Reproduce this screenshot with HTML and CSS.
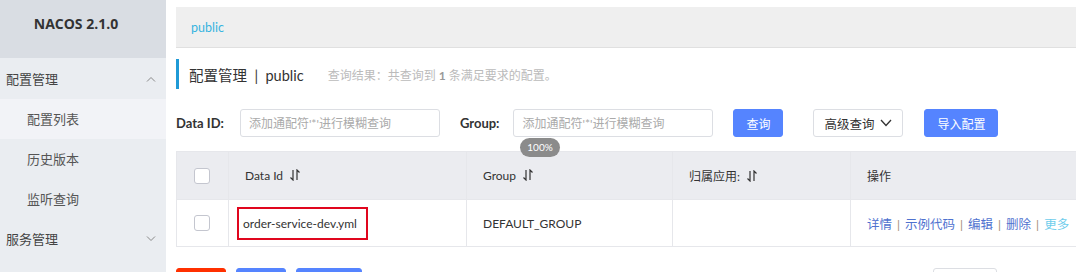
FILE: index.html
```html
<!DOCTYPE html>
<html lang="zh-CN">
<head>
  <meta charset="UTF-8" />
  <title>Nacos - 配置列表</title>
  <link rel="stylesheet" href="styles.css">
</head>
<body>

  <!-- Sidebar -->
  <aside class="sidebar">
    <div class="brand">NACOS 2.1.0</div>
    <ul class="menu">
      <li class="menu-group">配置管理
        <svg class="chev" width="10" height="6" viewBox="0 0 10 6"><path d="M1 5.5 L5 1.5 L9 5.5" fill="none" stroke="#888" stroke-width="1"/></svg>
      </li>
      <li class="menu-item active">配置列表</li>
      <li class="menu-item">历史版本</li>
      <li class="menu-item">监听查询</li>
      <li class="menu-group">服务管理
        <svg class="chev" width="10" height="6" viewBox="0 0 10 6"><path d="M1 0.5 L5 4.5 L9 0.5" fill="none" stroke="#888" stroke-width="1"/></svg>
      </li>
    </ul>
  </aside>

  <!-- Main -->
  <main class="main">
    <div class="crumb"><span>public</span></div>

    <div class="page-title">
      <span class="title">配置管理 &nbsp;|&nbsp; public</span>
      <span class="summary">查询结果：共查询到 <b>1</b> 条满足要求的配置。</span>
    </div>

    <div class="search">
      <label class="label label-first">Data ID:</label>
      <input class="input" placeholder="添加通配符'*'进行模糊查询">
      <label class="label">Group:</label>
      <input class="input" placeholder="添加通配符'*'进行模糊查询">
      <button class="btn btn-primary btn-query">查询</button>
      <button class="btn btn-normal btn-adv">高级查询
        <svg width="12" height="8" viewBox="0 0 12 8"><path d="M1 1 L6 6.5 L11 1" fill="none" stroke="#333" stroke-width="1.3"/></svg>
      </button>
      <button class="btn btn-primary">导入配置</button>
    </div>

    <div class="table-wrap">
      <div class="zoom-tip">100%</div>
      <table class="grid">
        <colgroup>
          <col style="width:52px"><col style="width:238px"><col style="width:206px"><col style="width:178px"><col>
        </colgroup>
        <thead>
          <tr>
            <th><span class="check"></span></th>
            <th>Data Id <svg class="sort" width="10" height="12" viewBox="0 0 10 12"><path d="M3 1 V11 L0.5 8.5 M7 11 V1 L9.5 3.5" fill="none" stroke="#333" stroke-width="1.2"/></svg></th>
            <th>Group <svg class="sort" width="10" height="12" viewBox="0 0 10 12"><path d="M3 1 V11 L0.5 8.5 M7 11 V1 L9.5 3.5" fill="none" stroke="#333" stroke-width="1.2"/></svg></th>
            <th>归属应用: <svg class="sort" width="10" height="12" viewBox="0 0 10 12"><path d="M3 1 V11 L0.5 8.5 M7 11 V1 L9.5 3.5" fill="none" stroke="#333" stroke-width="1.2"/></svg></th>
            <th>操作</th>
          </tr>
        </thead>
        <tbody>
          <tr>
            <td><span class="check"></span></td>
            <td><span class="mark">order-service-dev.yml</span></td>
            <td>DEFAULT_GROUP</td>
            <td></td>
            <td class="ops">
              <a>详情</a><i>|</i><a>示例代码</a><i>|</i><a>编辑</a><i>|</i><a>删除</a><i>|</i><a class="more">更多</a>
            </td>
          </tr>
        </tbody>
      </table>
    </div>

    <div class="bottom">
      <div class="bottom-left">
        <button class="btn btn-danger w50"></button>
        <button class="btn btn-primary w50"></button>
        <button class="btn btn-primary w66"></button>
      </div>
      <button class="btn btn-normal w64 pager"></button>
    </div>
  </main>

</body>
</html>
```

FILE: styles.css
```css
* {
  box-sizing: border-box;
}

body {
  margin: 0;
  display: flex;
  height: 272px;
  overflow: hidden;
  font-family: Lato, "Noto Sans CJK SC", sans-serif;
  font-size: 12px;
  color: #333;
  background: #fff;
}

/* Sidebar */
.sidebar {
  width: 166px;
  flex-shrink: 0;
  background: #eaedf1;
}

.brand {
  height: 58px;
  line-height: 48px;
  padding-right: 14px;
  text-align: center;
  background: #d9dde3;
  font-family: "Open Sans", sans-serif;
  font-weight: bold;
  font-size: 14px;
  color: #333;
}

.menu {
  list-style: none;
  margin: 0;
  padding: 0;
}

.menu li {
  height: 40px;
  line-height: 40px;
  font-size: 13px;
}

.menu-group {
  display: flex;
  align-items: center;
  justify-content: space-between;
  padding: 0 10px 0 6px;
  color: #444;
}

.menu-group:first-child {
  height: 41px;
}

.menu-item {
  padding-left: 27px;
  color: #555;
}

.menu-item.active {
  background: #f2f3f7;
}

/* Main */
.main {
  flex: 1;
  min-width: 0;
  overflow: hidden;
  padding: 7px 0 0 10px;
}

.crumb {
  height: 41px;
  background: #efefef;
  border-bottom: 1px solid #e0e0e0;
  padding: 13px 0 0 15px;
  color: #36b4e0;
  font-size: 12.5px;
}

.page-title {
  margin-top: 11px;
  height: 30px;
  border-left: 3px solid #1f9ad6;
  display: flex;
  align-items: center;
  padding-left: 10px;
}

.title {
  font-size: 14.5px;
  color: #333;
}

.summary {
  margin-left: 24px;
  font-size: 12px;
  color: #bbb;
}

.summary b {
  color: #999;
}

/* Search */
.search {
  margin-top: 20px;
  display: flex;
  align-items: center;
  height: 28px;
}

.label {
  font-weight: bold;
  font-size: 13px;
  color: #333;
  margin-right: 14px;
}

.label-first {
  margin-right: 16px;
}

.input {
  width: 200px;
  height: 28px;
  border: 1px solid #dcdee3;
  border-radius: 3px;
  padding: 0 8px;
  font-family: inherit;
  font-size: 12px;
  margin-right: 20px;
  outline: none;
}

.input::placeholder {
  color: #aaa;
}

.btn {
  height: 28px;
  border-radius: 3px;
  font-family: inherit;
  font-size: 12px;
  padding: 0;
  cursor: pointer;
}

.btn-primary {
  background: #5584ff;
  border: 1px solid #5584ff;
  color: #fff;
  width: 74px;
}

.btn-danger {
  background: #ff3000;
  border: 1px solid #ff3000;
}

.btn-normal {
  background: #fff;
  border: 1px solid #dcdee3;
  color: #333;
}

.btn-query {
  width: 50px;
  margin-right: 30px;
}

.btn-adv {
  width: 90px;
  margin-right: 21px;
  display: flex;
  align-items: center;
  justify-content: center;
  gap: 6px;
  font-size: 12.5px;
}

/* Table */
.table-wrap {
  position: relative;
  margin-top: 14px;
}

.zoom-tip {
  position: absolute;
  left: 344px;
  top: -13px;
  width: 40px;
  height: 19px;
  line-height: 19px;
  border-radius: 10px;
  background: #8b8b8b;
  color: #fff;
  font-size: 10px;
  text-align: center;
  z-index: 2;
}

.grid {
  width: 960px;
  table-layout: fixed;
  border-collapse: collapse;
  border-left: 1px solid #e6e7eb;
}

.grid th,
.grid td {
  text-align: left;
  padding: 0 16px;
  border-right: 1px solid #e6e7eb;
  border-bottom: 1px solid #e6e7eb;
  font-weight: normal;
  white-space: nowrap;
  color: #333;
  font-size: 12px;
}

.grid th {
  height: 48px;
  background: #ebecf0;
  border-top: 1px solid #e6e7eb;
}

.grid td {
  height: 47px;
}

.grid th:first-child,
.grid td:first-child {
  padding-left: 17px;
}

.check {
  display: inline-block;
  width: 16px;
  height: 16px;
  border: 1px solid #c4c6cf;
  border-radius: 3px;
  background: #fff;
  vertical-align: middle;
}

.sort {
  vertical-align: -1px;
  margin-left: 4px;
}

.mark {
  display: inline-block;
  margin-left: -8px;
  padding: 7px 9px 7px 4px;
  border: 2px solid #e0061e;
  font-size: 12px;
}

.ops a {
  color: #4f72cf;
  font-size: 12.5px;
}

.ops a.more {
  color: #6fcdec;
}

.ops i {
  font-style: normal;
  color: #a08a70;
  margin: 0 5px;
}

/* Bottom buttons */
.bottom {
  margin-top: 21px;
  display: flex;
  justify-content: space-between;
  width: 821px;
}

.bottom-left {
  display: flex;
  gap: 10px;
}

.w50 { width: 50px; }
.w66 { width: 66px; }
.w64 { width: 64px; }
```
